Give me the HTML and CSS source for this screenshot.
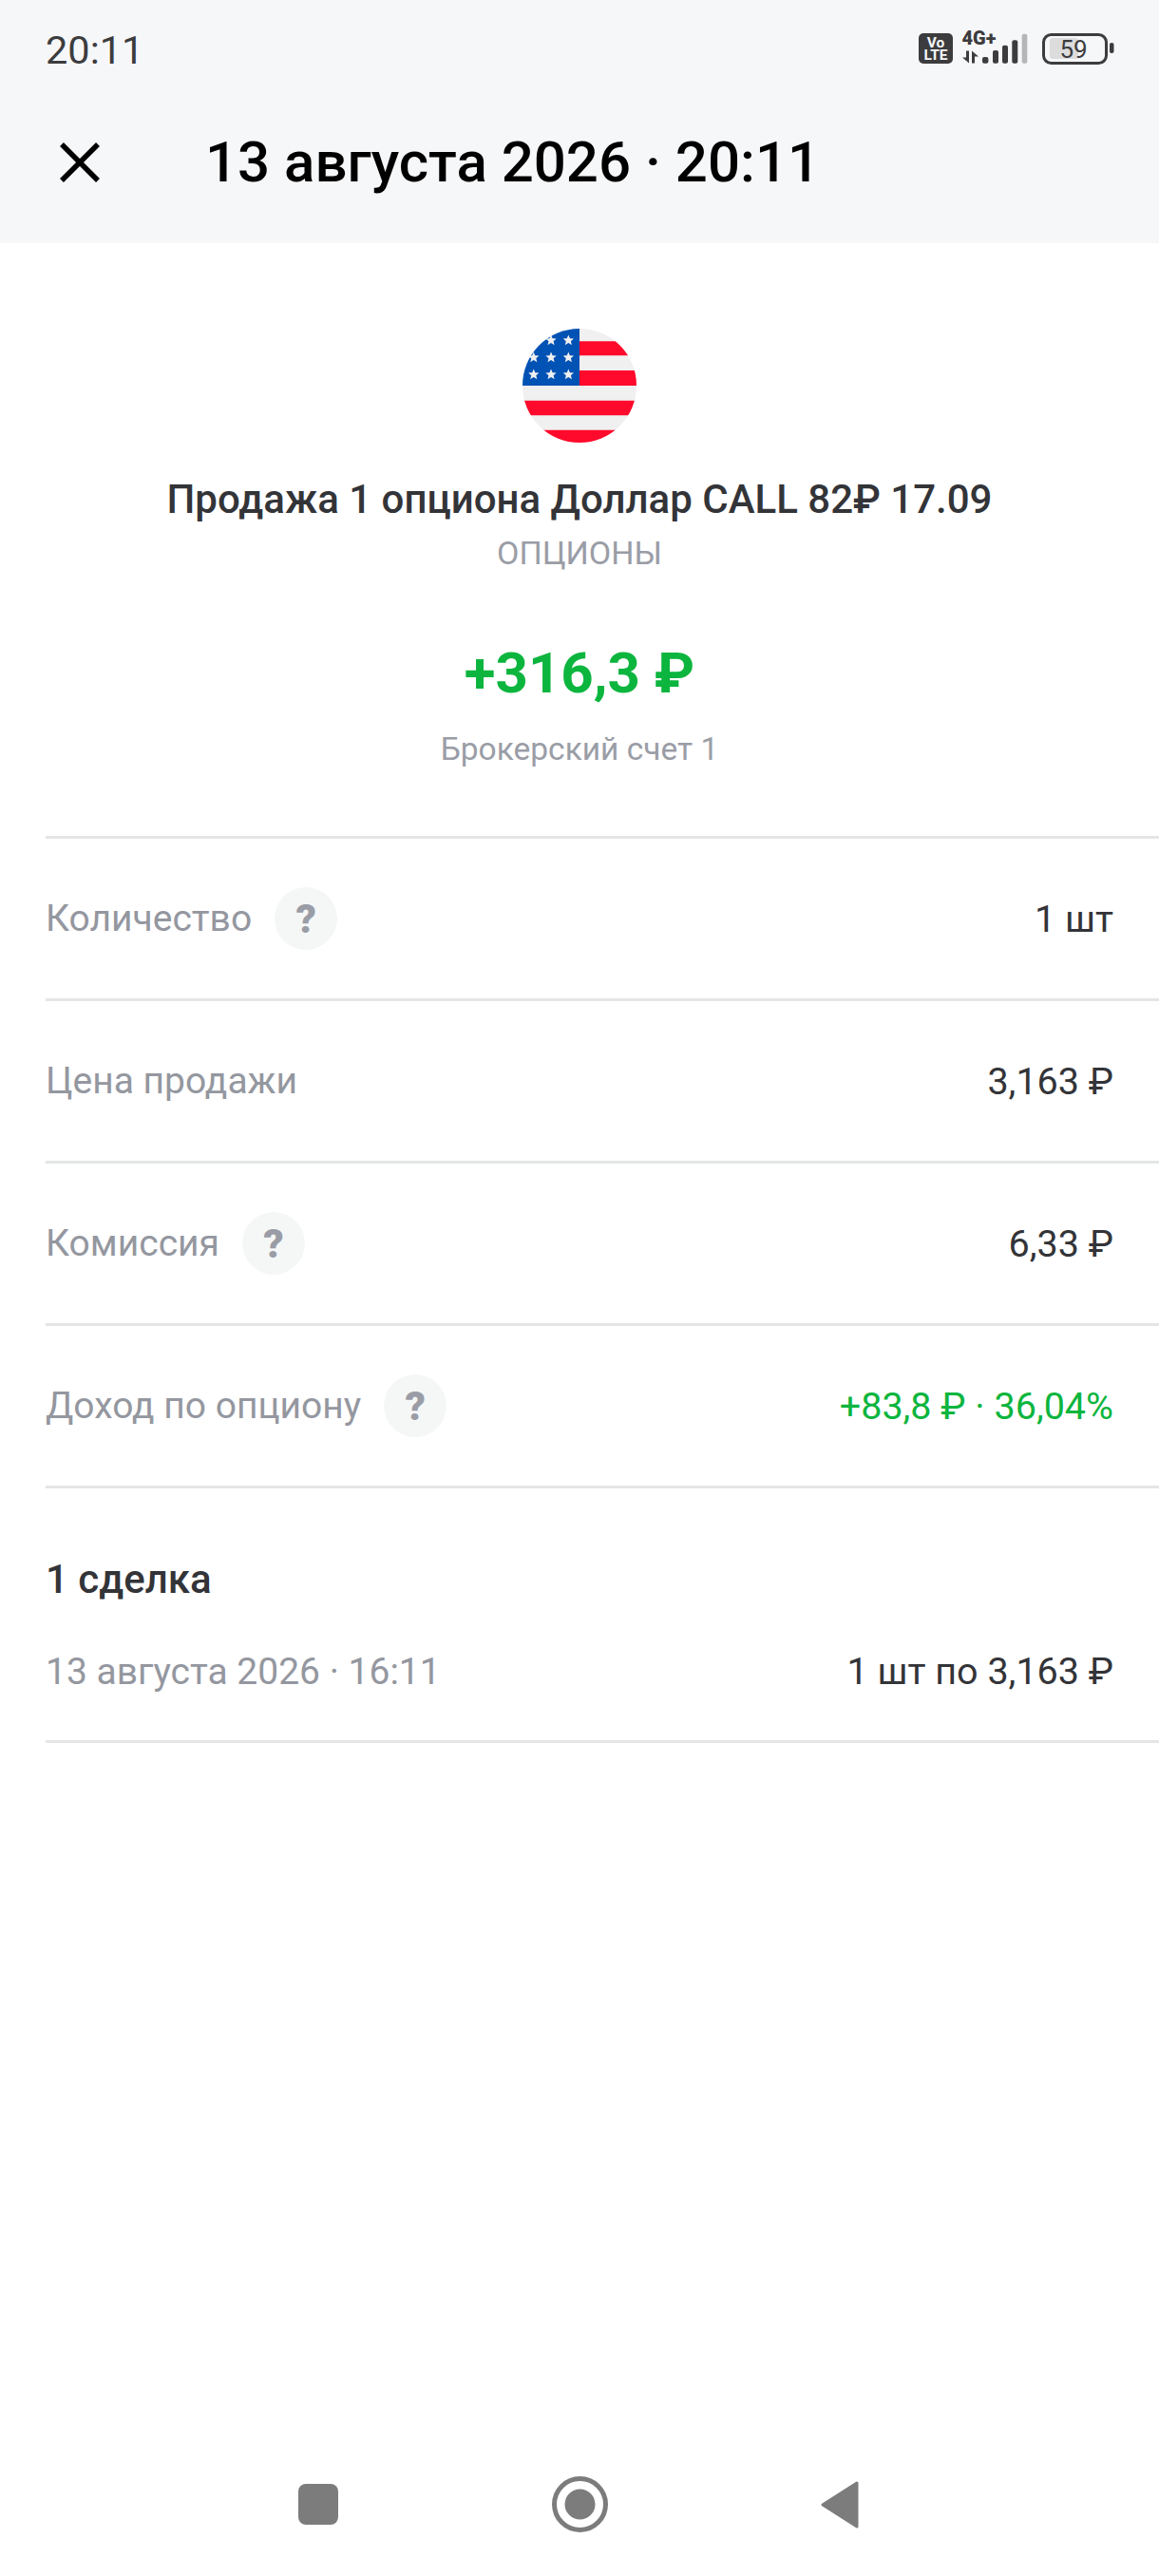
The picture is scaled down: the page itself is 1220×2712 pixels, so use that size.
FILE: index.html
```html
<!DOCTYPE html>
<html lang="ru">

<head>
    <meta charset="UTF-8">
    <meta name="viewport" content="width=device-width, initial-scale=1.0">
    <title>Операция</title>
    <link rel="stylesheet" href="styles.css">
</head>

<body>
    <header class="top">
        <div class="status">
            <span class="clock">20:11</span>
            <svg class="status-icons" width="206" height="50" viewBox="0 -10 206 50">
                <rect x="0" y="5" width="36" height="32" rx="5" fill="#3c3c3e" />
                <text x="18" y="19.5" class="volte">Vo</text>
                <text x="18" y="33" class="volte">LTE</text>
                <text x="45.5" y="16.5" class="net">4G+</text>
                <path d="M50 23.5h3v13l-7-6h4zM56 23.5l7 6h-4v7h-3z" fill="#3c3c3e" />
                <rect x="67" y="30" width="6.4" height="6.7" rx="2" fill="#3c3c3e" />
                <rect x="78" y="23" width="6" height="13.7" rx="2" fill="#3c3c3e" />
                <rect x="88" y="17.7" width="6" height="19" rx="2" fill="#3c3c3e" />
                <rect x="98.3" y="12.3" width="6" height="24.4" rx="2" fill="#3c3c3e" />
                <rect x="108.7" y="5.7" width="5.6" height="31" rx="2" fill="#b5b5b5" />
                <rect x="131.5" y="6.5" width="66" height="30" rx="8" fill="none" stroke="#3c3c3e" stroke-width="3" />
                <rect x="138" y="10" width="30" height="22" rx="3" fill="#dcdcdc" />
                <text x="163" y="31" class="charge">59</text>
                <rect x="201" y="15" width="4.5" height="11" rx="2" fill="#3c3c3e" />
            </svg>
        </div>
        <div class="bar">
            <svg class="close" width="42" height="42" viewBox="0 0 42 42">
                <path d="M2 2L40 40M40 2L2 40" stroke="#000" stroke-width="5.5" fill="none" />
            </svg>
            <h1>13 августа 2026 · 20:11</h1>
        </div>
    </header>

    <main class="content">
        <div class="summary">
            <svg class="flag" width="120" height="120" viewBox="0 0 120 120">
                <clipPath id="round">
                    <circle cx="60" cy="60" r="60" />
                </clipPath>
                <g clip-path="url(#round)">
                    <rect width="120" height="120" fill="#f0f0f0" />
                    <path d="M60 13.3H120V28.3H60zM60 44H120V60H60zM0 75.7H120V91.3H0zM0 106.7H120V120H0z" fill="#ff0a2c" />
                    <rect width="60" height="60" fill="#0052b4" />
                </g>
                <g fill="#f0f0f0">
                    <path id="s" d="M48.3 6.5l1.6 3.8 4.1.3-3.1 2.7 1 4-3.6-2.2-3.5 2.2 1-4-3.1-2.7 4.1-.3z" />
                    <use href="#s" x="-18.3" />
                    <use href="#s" y="18" />
                    <use href="#s" x="-18.3" y="18" />
                    <use href="#s" x="-36.6" y="18" />
                    <use href="#s" y="36" />
                    <use href="#s" x="-18.3" y="36" />
                    <use href="#s" x="-36.6" y="36" />
                </g>
            </svg>
            <div class="name">Продажа 1 опциона Доллар CALL 82₽ 17.09</div>
            <div class="kind">ОПЦИОНЫ</div>
            <div class="amount">+316,3 ₽</div>
            <div class="account">Брокерский счет 1</div>
        </div>

        <div class="row">
            <span class="label">Количество</span><span class="hint">?</span>
            <span class="value">1 шт</span>
        </div>
        <div class="row">
            <span class="label">Цена продажи</span>
            <span class="value">3,163 ₽</span>
        </div>
        <div class="row">
            <span class="label">Комиссия</span><span class="hint">?</span>
            <span class="value">6,33 ₽</span>
        </div>
        <div class="row">
            <span class="label">Доход по опциону</span><span class="hint">?</span>
            <span class="value green">+83,8 ₽ · 36,04%</span>
        </div>

        <div class="deals">
            <h2>1 сделка</h2>
            <div class="deal">
                <span class="label">13 августа 2026 · 16:11</span>
                <span class="value">1 шт по 3,163 ₽</span>
            </div>
        </div>
    </main>

    <nav class="nav">
        <svg width="42" height="43" viewBox="0 0 42 43">
            <rect width="42" height="43" rx="8" fill="#7c7c7c" />
        </svg>
        <svg width="59" height="59" viewBox="0 0 59 59">
            <circle cx="29.5" cy="29.5" r="27" fill="none" stroke="#7c7c7c" stroke-width="5" />
            <circle cx="29.5" cy="29.5" r="16" fill="#7c7c7c" />
        </svg>
        <svg width="40" height="50" viewBox="0 0 40 50">
            <path d="M38 2V48L2 25z" fill="#7c7c7c" stroke="#7c7c7c" stroke-width="3" stroke-linejoin="round" />
        </svg>
    </nav>
</body>

</html>
```

FILE: styles.css
```css
* {
    box-sizing: border-box;
}

body {
    margin: 0;
    min-height: 100vh;
    display: flex;
    flex-direction: column;
    background-color: #fff;
    font-family: Roboto, "Noto Sans", sans-serif;
}

.top {
    height: 256px;
    background-color: #f6f7f9;
}

.status {
    height: 100px;
    padding: 20px 47px 0 48px;
    display: flex;
    justify-content: space-between;
    align-items: flex-start;
}

.clock {
    margin-top: 10px;
    font-size: 41.5px;
    line-height: 46px;
    color: #3c3c3e;
}

.volte {
    font: 700 15.5px Roboto, sans-serif;
    fill: #f6f7f9;
    text-anchor: middle;
}

.net {
    font: 900 20px Roboto, sans-serif;
    fill: #3c3c3e;
}

.charge {
    font: 400 26px Roboto, sans-serif;
    fill: #3c3c3e;
    text-anchor: middle;
}

.bar {
    display: flex;
    align-items: center;
    padding: 36px 0 0 63px;
    gap: 111px;
}

h1 {
    margin: 0;
    font-size: 60px;
    font-weight: 500;
    line-height: 70px;
    color: #000;
}

.content {
    flex: 1;
    padding-left: 48px;
}

.summary {
    margin-left: -48px;
    height: 624px;
    padding-top: 90px;
    display: flex;
    flex-direction: column;
    align-items: center;
}

.name {
    margin-top: 35px;
    font-size: 42px;
    font-weight: 500;
    line-height: 50px;
    color: #333438;
}

.kind {
    margin-top: 9px;
    font-size: 34px;
    line-height: 44px;
    color: #9a9da6;
}

.amount {
    margin-top: 70px;
    font-size: 60px;
    font-weight: 700;
    line-height: 70px;
    color: #0cb53e;
}

.account {
    margin-top: 24px;
    font-size: 33.5px;
    line-height: 42px;
    color: #9a9da6;
}

.row {
    height: 171px;
    display: flex;
    align-items: center;
    padding-right: 48px;
    border-top: 3px solid #e3e5e7;
}

.label {
    font-size: 39px;
    color: #94979f;
}

.hint {
    width: 66px;
    height: 66px;
    margin-left: 24px;
    border-radius: 50%;
    background-color: #f5f7f7;
    display: flex;
    align-items: center;
    justify-content: center;
    font-size: 42px;
    font-weight: 900;
    color: #9a9da6;
}

.value {
    margin-left: auto;
    font-size: 39.5px;
    color: #333438;
}

.green {
    color: #0cb53e;
}

.deals {
    height: 271px;
    padding: 0 48px 0 0;
    border-top: 3px solid #e3e5e7;
    border-bottom: 3px solid #e3e5e7;
}

h2 {
    margin: 71px 0 0;
    font-size: 42px;
    font-weight: 500;
    line-height: 50px;
    color: #333438;
}

.deal {
    margin-top: 48px;
    display: flex;
    align-items: center;
}

.nav {
    height: 141px;
    display: flex;
    align-items: center;
    justify-content: center;
    gap: 224.5px;
    padding: 0 2px 10px 0;
}
```
